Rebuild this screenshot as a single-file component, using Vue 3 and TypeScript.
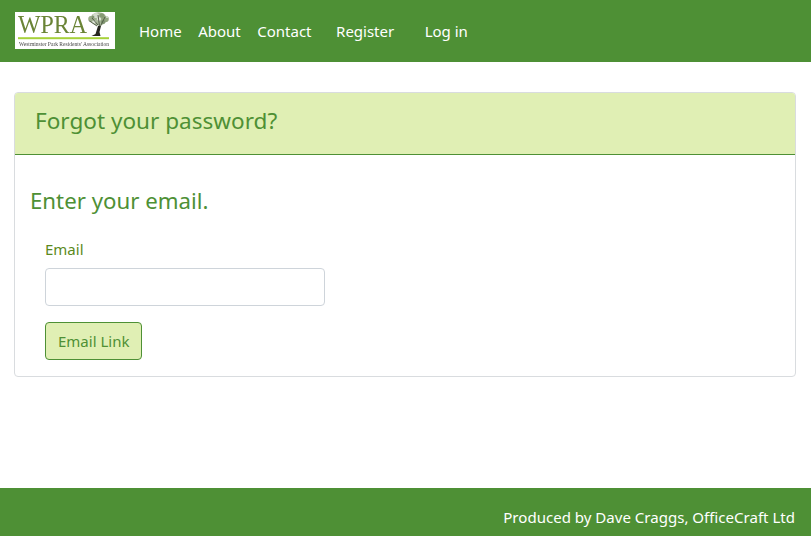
<template>
  <div class="page">
    <nav class="navbar">
      <a class="brand" href="#">
        <svg class="logo" width="100" height="37" viewBox="0 0 100 37">
          <rect width="100" height="37" fill="#fff" />
          <text x="3" y="21" class="logo-title" textLength="69" lengthAdjust="spacingAndGlyphs">WPRA</text>
          <rect x="3" y="25.2" width="91" height="2" fill="#a6d13a" />
          <text x="4" y="33.5" class="logo-sub" textLength="90" lengthAdjust="spacingAndGlyphs">Westminster Park Residents' Association</text>
          <ellipse v-for="(c, i) in crown" :key="i" :cx="c[0]" :cy="c[1]" :rx="c[2]" :ry="c[2] * 0.85" :fill="c[3]" />
          <path d="M77 6 L83 13 M90 5 L85.5 14 M83 3 L84.5 14 M74.5 9 L82 14" stroke="#4a5240" stroke-width="0.9" fill="none" />
          <path d="M76.5 24 L80.5 22 L83 14 L86 14 L84.5 20 L85.5 24 Z" fill="#26261f" />
        </svg>
      </a>
      <ul class="links">
        <li v-for="link in mainLinks" :key="link"><a href="#">{{ link }}</a></li>
      </ul>
      <ul class="links account">
        <li><a href="#">Register</a></li>
        <li><a href="#">Log in</a></li>
      </ul>
    </nav>

    <main class="content">
      <section class="card">
        <header class="card-header">
          <h2>Forgot your password?</h2>
        </header>
        <div class="card-body">
          <h3>Enter your email.</h3>
          <form class="form" @submit.prevent>
            <label for="email">Email</label>
            <input id="email" v-model="email" type="email" />
            <button type="submit">Email Link</button>
          </form>
        </div>
      </section>
    </main>

    <footer class="footer">Produced by Dave Craggs, OfficeCraft Ltd</footer>
  </div>
</template>

<script setup lang="ts">
import { ref } from 'vue'

const mainLinks: string[] = ['Home', 'About', 'Contact']
const email = ref<string>('')

// leaf clumps of the logo tree: x, y, radius, colour
const crown: [number, number, number, string][] = [
  [83.5, 7, 8, '#a9b99a'],
  [77, 7, 3.8, '#9dae8c'],
  [90, 7, 3.8, '#93a680'],
  [81, 3.5, 3, '#d3dccb'],
  [87, 3.5, 2.6, '#869a74'],
  [79, 10, 2, '#dbe3d4'],
  [88, 10, 2.4, '#7f9470'],
  [84, 7, 2, '#e4eadf'],
  [78, 5, 1.4, '#7f9470'],
  [92, 5, 1.3, '#d3dccb']
]
</script>

<style>
body {
  margin: 0;
  background: #ffffff;
}
</style>

<style scoped>
.page {
  display: flex;
  flex-direction: column;
  height: 536px;
  font-family: "Noto Sans", "Open Sans", sans-serif;
  font-size: 15px;
  color: #4e9035;
  overflow: hidden;
}

.navbar {
  display: flex;
  align-items: center;
  height: 62px;
  padding: 0 15px;
  background: #4e9035;
}

.brand {
  display: block;
  height: 37px;
  margin: -1px 15.75px 0 0;
}

.logo {
  display: block;
  overflow: visible;
  filter: blur(0.3px);
}

.links {
  display: flex;
  list-style: none;
  margin: 0;
  padding: 0;
}

.links li {
  padding: 0 8.25px;
}

.links a {
  color: #ffffff;
  text-decoration: none;
}

.account {
  margin-left: 8px;
  gap: 14px;
}

.content {
  flex: 1;
  padding: 30px 15px 0 14px;
}

.card {
  border: 1px solid #d9dcdf;
  border-radius: 4px;
  overflow: hidden;
}

.card-header {
  height: 61px;
  padding: 0 20px;
  background: #e0efb4;
  border-bottom: 1px solid #4e9035;
}

.card-header h2 {
  margin: 0;
  padding-top: 12px;
  font-size: 22.55px;
  line-height: 31px;
  font-weight: 400;
}

.card-body {
  padding: 30px 15px 16px;
}

.card-body h3 {
  margin: 0 0 22px;
  font-size: 22.25px;
  line-height: 31px;
  font-weight: 400;
}

.form {
  display: flex;
  flex-direction: column;
  align-items: flex-start;
  padding-left: 15px;
}

.form label {
  margin-bottom: 8px;
  line-height: 22px;
  color: #5b8a1e;
}

.form input {
  box-sizing: border-box;
  width: 280px;
  height: 38px;
  margin-bottom: 16px;
  border: 1px solid #ced4da;
  border-radius: 4px;
  background: #ffffff;
  outline: none;
}

.form button {
  box-sizing: border-box;
  height: 38px;
  padding: 0 12px;
  border: 1px solid #4e9035;
  border-radius: 4px;
  background: #e0efb4;
  color: #4e9035;
  font: inherit;
}

.footer {
  height: 48px;
  padding: 0 16px;
  font-size: 15.05px;
  line-height: 58px;
  text-align: right;
  background: #4e9035;
  color: #ffffff;
}

.logo-title {
  font-family: "Liberation Serif", serif;
  font-size: 26px;
  fill: #6a8436;
}

.logo-sub {
  font-family: "Liberation Serif", serif;
  font-size: 5.5px;
  fill: #444444;
}
</style>
